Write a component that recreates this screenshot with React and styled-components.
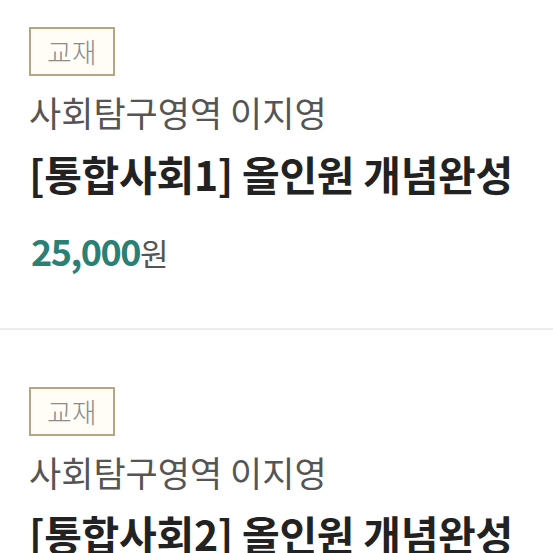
import React from "react";
import styled, { createGlobalStyle } from "styled-components";

const Global = createGlobalStyle`
  html, body { margin: 0; padding: 0; background: #ffffff; }
  body { font-family: "Noto Sans CJK KR", "Noto Sans", sans-serif; overflow: hidden; }
`;

const Viewport = styled.div`
  width: 553px;
  height: 553px;
  overflow: hidden;
  background: #ffffff;
`;

const List = styled.ul`
  list-style: none;
  margin: -30px 0 0 0;
  padding: 0;
`;

const Item = styled.li`
  padding: 57px 29px 53px;
  border-bottom: 2px solid #ececec;
  display: flex;
  flex-direction: column;
  align-items: flex-start;
`;

const Badge = styled.span`
  display: inline-block;
  box-sizing: border-box;
  height: 49px;
  padding: 0 16px;
  border: 2px solid #b8a57f;
  background: #fffdf6;
  color: #8c8c8c;
  font-size: 27px;
  font-weight: 300;
  line-height: 45px;
  letter-spacing: 0;
`;

const Author = styled.div`
  margin-top: 14px;
  color: #555555;
  font-size: 35px;
  line-height: 44px;
  letter-spacing: 0;
`;

const Title = styled.h2`
  margin: 14px 0 0;
  color: #222222;
  font-size: 41px;
  font-weight: 700;
  line-height: 50px;
  letter-spacing: -0.3px;
`;

const Price = styled.div`
  margin-top: 30px;
  display: flex;
  align-items: baseline;
  line-height: 44px;
  padding-left: 2px;
`;

const Amount = styled.span`
  color: #2b7f74;
  font-size: 36px;
  font-weight: 700;
  letter-spacing: -1.5px;
`;

const Unit = styled.span`
  color: #555555;
  font-size: 31px;
  font-weight: 400;
`;

const items = [
  { tag: "교재", author: "사회탐구영역 이지영", title: "[통합사회1] 올인원 개념완성", price: "25,000" },
  { tag: "교재", author: "사회탐구영역 이지영", title: "[통합사회2] 올인원 개념완성", price: "25,000" },
];

export default function App() {
  return (
    <Viewport>
      <Global />
      <List>
        {items.map((it, i) => (
          <Item key={i}>
            <Badge>{it.tag}</Badge>
            <Author>{it.author}</Author>
            <Title>{it.title}</Title>
            <Price>
              <Amount>{it.price}</Amount>
              <Unit>원</Unit>
            </Price>
          </Item>
        ))}
      </List>
    </Viewport>
  );
}
